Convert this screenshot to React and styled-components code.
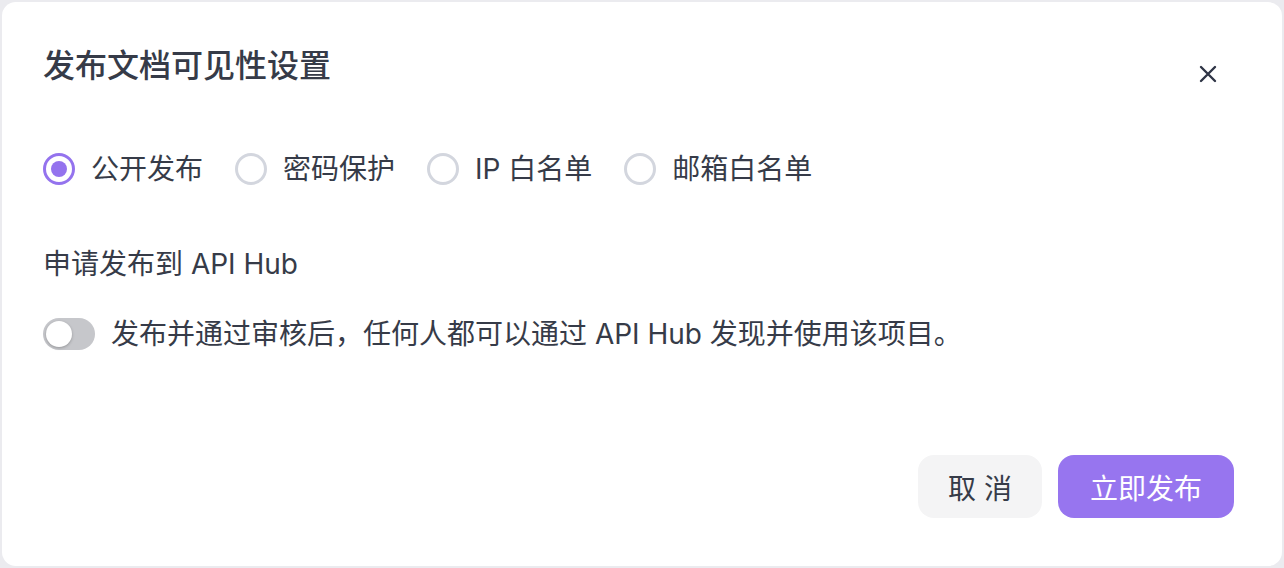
import React, { useState } from 'react';
import styled, { createGlobalStyle } from 'styled-components';

const GlobalStyle = createGlobalStyle`
  html, body {
    margin: 0;
    padding: 0;
    background: #ebebef;
  }
  body {
    font-family: Inter, "Noto Sans CJK SC", sans-serif;
    color: #363b48;
  }
  * { box-sizing: border-box; }
`;

const options = [
  { id: 'public', label: '公开发布' },
  { id: 'password', label: '密码保护' },
  { id: 'ip', label: 'IP 白名单' },
  { id: 'email', label: '邮箱白名单' },
];

const App = () => {
  const [visibility, setVisibility] = useState('public');
  const [hub, setHub] = useState(false);

  return (
    <>
      <GlobalStyle />
      <Page>
        <Dialog>
          <Header>
            <Title>发布文档可见性设置</Title>
            <CloseButton aria-label="关闭">
              <svg width="18" height="18" viewBox="0 0 18 18">
                <path d="M2 2 L16 16 M16 2 L2 16" stroke="#2f3546" strokeWidth="2.4" strokeLinecap="round" />
              </svg>
            </CloseButton>
          </Header>

          <RadioGroup>
            {options.map((opt) => (
              <RadioItem key={opt.id} onClick={() => setVisibility(opt.id)}>
                <RadioCircle $checked={visibility === opt.id} />
                <span>{opt.label}</span>
              </RadioItem>
            ))}
          </RadioGroup>

          <SectionLabel>申请发布到 API Hub</SectionLabel>

          <ToggleRow>
            <Toggle $on={hub} onClick={() => setHub(!hub)}>
              <Knob />
            </Toggle>
            <span>发布并通过审核后，任何人都可以通过 API Hub 发现并使用该项目。</span>
          </ToggleRow>

          <Footer>
            <Button>取 消</Button>
            <Button $primary>立即发布</Button>
          </Footer>
        </Dialog>
      </Page>
    </>
  );
};

const Page = styled.div`
  height: 568px;
  padding: 2px;
  display: flex;
`;

const Dialog = styled.div`
  flex: 1;
  background: #ffffff;
  border-radius: 14px;
  padding: 40px 48px 48px 41px;
  display: flex;
  flex-direction: column;
`;

const Header = styled.div`
  display: flex;
  justify-content: space-between;
  align-items: flex-start;
`;

const Title = styled.h2`
  margin: 0;
  font-size: 32px;
  line-height: 48px;
  font-weight: 500;
  color: #363b48;
`;

const CloseButton = styled.button`
  margin: 16px 10px 0 0;
  width: 32px;
  height: 32px;
  padding: 0;
  border: none;
  background: none;
  display: flex;
  align-items: center;
  justify-content: center;
  cursor: pointer;
`;

const RadioGroup = styled.div`
  display: flex;
  align-items: center;
  gap: 32px;
  margin-top: 63px;
`;

const RadioItem = styled.label`
  display: flex;
  align-items: center;
  gap: 16px;
  font-size: 28px;
  line-height: 32px;
  color: #363b48;
  cursor: pointer;
`;

const RadioCircle = styled.span`
  width: 32px;
  height: 32px;
  border-radius: 50%;
  border: 3.5px solid ${(p) => (p.$checked ? '#9473ee' : '#d3d6de')};
  display: flex;
  align-items: center;
  justify-content: center;
  flex-shrink: 0;

  &::after {
    content: '';
    width: 16px;
    height: 16px;
    border-radius: 50%;
    background: #9473ee;
    display: ${(p) => (p.$checked ? 'block' : 'none')};
  }
`;

const SectionLabel = styled.div`
  margin-top: 58px;
  font-size: 28px;
  line-height: 42px;
  color: #363b48;
`;

const ToggleRow = styled.div`
  display: flex;
  align-items: center;
  gap: 16px;
  margin-top: 33px;
  font-size: 28px;
  line-height: 32px;
  color: #363b48;
`;

const Toggle = styled.span`
  width: 52px;
  height: 32px;
  border-radius: 16px;
  background: ${(p) => (p.$on ? '#9473ee' : '#c6c7cb')};
  padding: 3px;
  display: flex;
  justify-content: ${(p) => (p.$on ? 'flex-end' : 'flex-start')};
  flex-shrink: 0;
  cursor: pointer;
`;

const Knob = styled.span`
  width: 26px;
  height: 26px;
  border-radius: 50%;
  background: #ffffff;
  box-shadow: 0 1px 3px rgba(0, 0, 0, 0.25);
`;

const Footer = styled.div`
  margin-top: auto;
  display: flex;
  justify-content: flex-end;
  gap: 16px;
`;

const Button = styled.button`
  height: 63px;
  padding: 0 ${(p) => (p.$primary ? '32px' : '30px')};
  border: none;
  border-radius: 16px;
  font-family: Inter, "Noto Sans CJK SC", sans-serif;
  font-size: 28px;
  background: ${(p) => (p.$primary ? '#9775ef' : '#f4f4f5')};
  color: ${(p) => (p.$primary ? '#ffffff' : '#363b48')};
  cursor: pointer;
`;

export default App;
